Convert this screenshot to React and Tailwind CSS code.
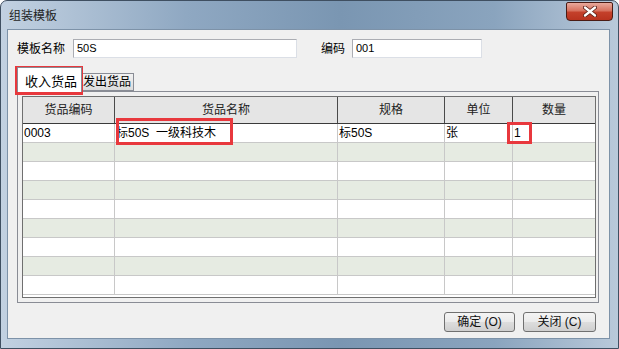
import React from 'react'

const COLS = [
  { label: '货品编码', w: 'w-[92px]' },
  { label: '货品名称', w: 'w-[223px]' },
  { label: '规格', w: 'w-[107px]' },
  { label: '单位', w: 'w-[68px]' },
  { label: '数量', w: 'flex-1' },
]

const FIRST_ROW = ['0003', '标50S  一级科技木', '标50S', '张', '1']

function Input({ value, className }) {
  return (
    <div className={`h-[19px] bg-white border border-[#dbdfe6] border-t-[#abadb3] border-l-[#abadb3] flex items-center pl-[3px] text-[11px] ${className}`}>
      {value}
    </div>
  )
}

function Button({ children, className }) {
  return (
    <button className={`h-[20px] rounded-[3px] border border-[#707070] bg-[linear-gradient(180deg,#f4f4f4_0%,#ebebeb_48%,#dddddd_52%,#cfcfcf_100%)] text-[12px] text-[#111] flex items-center justify-center whitespace-pre ${className}`}>
      {children}
    </button>
  )
}

export default function App() {
  return (
    <div className="relative w-[619px] h-[349px] rounded-t-[7px] border border-[#3f4f61] bg-[linear-gradient(90deg,#c2d1e1_0%,#8fa8c2_30%,#7a96b2_55%,#8aa4be_80%,#b9c9da_100%)] flex flex-col pl-[6px] pr-[8px] pb-[9px] font-['Liberation_Sans','Noto_Sans_CJK_SC',sans-serif] text-[12px] text-black">
      {/* title bar */}
      <div className="h-[28px] flex justify-between">
        <span className="pl-[2px] pt-[6px] text-[12px] text-[#1e1e1e]">组装模板</span>
        <div className="mt-[1px] -mr-[3px] w-[47px] h-[19px] rounded-b-[4px] rounded-t-[2px] border border-[#4a1b14] bg-[linear-gradient(180deg,#e8a99c_0%,#d7725f_45%,#c4402b_55%,#b8331f_100%)] flex items-center justify-center">
          <svg width="14" height="11" viewBox="0 0 14 11">
            <path d="M2 1.5 L12 9.5 M12 1.5 L2 9.5" stroke="#5a2018" strokeWidth="4" strokeLinecap="round" />
            <path d="M2 1.5 L12 9.5 M12 1.5 L2 9.5" stroke="#ffffff" strokeWidth="2.3" strokeLinecap="round" />
          </svg>
        </div>
      </div>

      {/* client area */}
      <div className="flex-1 bg-[#f0f0f0] border border-[#7d92a8] flex flex-col">
        {/* form row */}
        <div className="flex items-center pt-[9px] pl-[9px]">
          <span className="w-[56px]">模板名称</span>
          <Input value="50S" className="w-[224px]" />
          <span className="ml-[24px] w-[31px]">编码</span>
          <Input value="001" className="w-[130px]" />
        </div>

        {/* tabs */}
        <div className="flex items-end h-[24px] mt-[9px] ml-[9px]">
          <div className="relative z-10 -mb-px w-[65px] h-[25px] bg-white border border-b-0 border-[#898c95] pl-[7px] pt-[4px] text-[13px]">收入货品</div>
          <div className="w-[52px] h-[18px] border border-l-0 border-[#898c95] bg-[linear-gradient(180deg,#f2f2f2,#dcdcdc)] pl-[1px] text-[12px] leading-[17px]">发出货品</div>
        </div>

        {/* tab panel */}
        <div className="ml-[9px] w-[582px] h-[212px] border border-[#898c95] bg-[#f0f0f0] pl-[4px] pt-[4px] pr-[2px] pb-[4px] flex">
          <div className="flex-1 border border-[#6f6f6f] bg-white flex flex-col">
            <div className="flex h-[27px] bg-[#e5e5e5] border-b border-[#3a3a3a]">
              {COLS.map((c, i) => (
                <div key={c.label} className={`${c.w} flex items-center justify-center text-[#222] ${i < 4 ? 'border-r border-[#4a4a4a]' : ''}`}>
                  {c.label}
                </div>
              ))}
            </div>
            {[...Array(9)].map((_, r) => (
              <div key={r} className={`flex h-[19px] border-b border-[#c8c8c8] ${r % 2 === 1 ? 'bg-[#e6ebe2]' : 'bg-white'}`}>
                {COLS.map((c, i) => (
                  <div key={c.label} className={`${c.w} flex items-center pl-[1px] text-[12px] whitespace-pre ${i < 4 ? 'border-r border-[#c8c8c8]' : ''}`}>
                    {r === 0 ? FIRST_ROW[i] : ''}
                  </div>
                ))}
              </div>
            ))}
          </div>
        </div>

        {/* buttons */}
        <div className="flex justify-end gap-[8px] mt-[9px] pr-[13px]">
          <Button className="w-[71px]">确定 (O)</Button>
          <Button className="w-[73px]">关闭 (C)</Button>
        </div>
      </div>

      {/* red annotation boxes */}
      <div className="absolute left-[14px] top-[65px] w-[68px] h-[29px] border-[3px] border-[#e8383d]" />
      <div className="absolute left-[115px] top-[117px] w-[117px] h-[27px] border-[3px] border-[#e8383d]" />
      <div className="absolute left-[506px] top-[121px] w-[25px] h-[22px] border-[3px] border-[#e8383d]" />
    </div>
  )
}
